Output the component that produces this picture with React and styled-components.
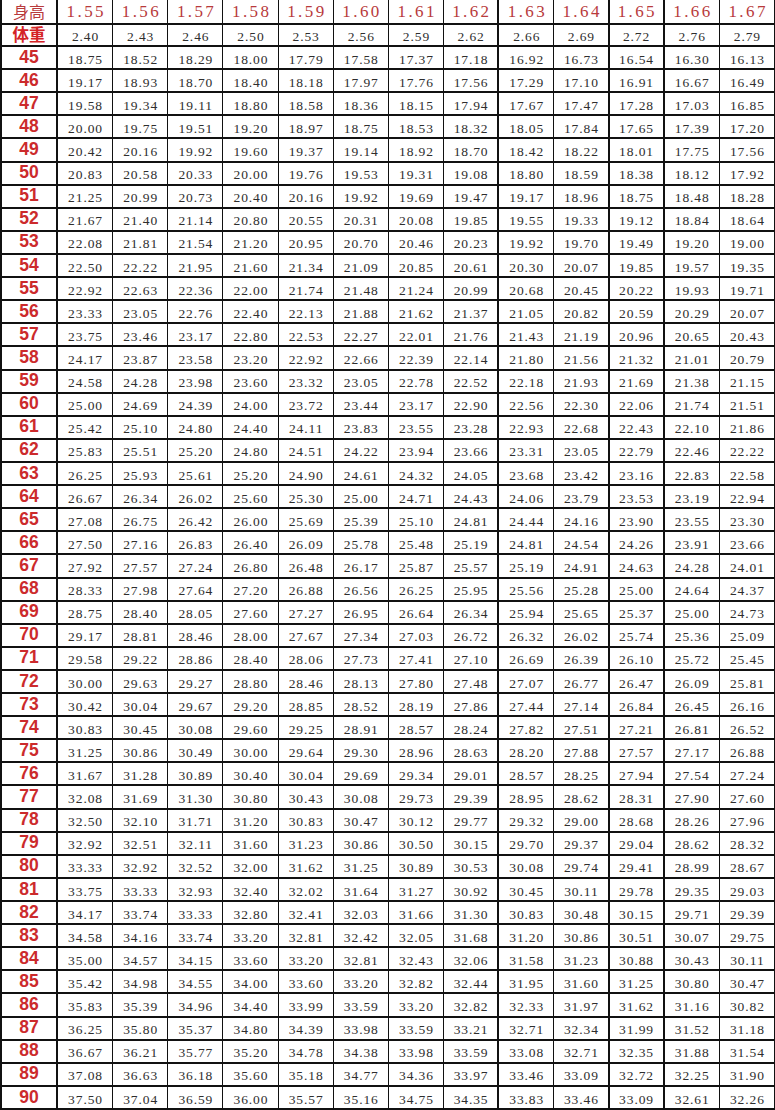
import React from "react";
import styled, { createGlobalStyle } from "styled-components";

const Global = createGlobalStyle`
  html, body { margin: 0; padding: 0; background: #fff; }
  body { width: 775px; overflow: hidden; }
`;

const heights = [1.55, 1.56, 1.57, 1.58, 1.59, 1.6, 1.61, 1.62, 1.63, 1.64, 1.65, 1.66, 1.67];
const squares = heights.map((h) => Math.round(h * h * 100) / 100);
const weights = Array.from({ length: 46 }, (_, i) => 45 + i);
const thickAfter = new Set([7, 9, 10]);

const Grid = styled.div`
  display: grid;
  width: 775px;
  height: 1110px;
  box-sizing: border-box;
  grid-template-columns: 56px repeat(13, 1fr);
  grid-template-rows: 25px 22px repeat(46, 1fr);
  border-left: 2px solid #111;
  background: #fff;
`;

const Cell = styled.div`
  box-sizing: border-box;
  display: flex;
  align-items: flex-end;
  justify-content: center;
  border-bottom: 2px solid #111;
  border-right: ${(p) => (p.$thick ? "2px" : "1px")} solid #111;
  padding-bottom: ${(p) => (p.$head ? "3px" : "2px")};
  white-space: nowrap;
  line-height: 1;
  min-height: 0;
`;

const Num = styled.span`
  font-family: "Liberation Serif", "DejaVu Serif", serif;
  font-size: 13.5px;
  letter-spacing: 0.9px;
  color: #2e2e2e;
  padding-left: 0.9px;
`;

const HeadNum = styled.span`
  font-family: "Liberation Serif", "DejaVu Serif", serif;
  font-size: 17px;
  letter-spacing: 2.4px;
  color: #b83a3c;
  padding-left: 2.4px;
`;

const HeadLabel = styled.span`
  font-family: "Noto Sans CJK SC", "Noto Sans", sans-serif;
  font-size: 16px;
  line-height: 18px;
  color: #b83a3c;
`;

const BoldLabel = styled.span`
  font-family: "Noto Sans CJK SC", "Noto Sans", sans-serif;
  font-weight: 700;
  font-size: 16.5px;
  line-height: 18px;
  color: #d42426;
`;

const RowLabel = styled.span`
  font-family: "Liberation Sans", "Arial", sans-serif;
  font-weight: 700;
  font-size: 17.5px;
  color: #cc2a2c;
`;

const fmt = (v) => (Math.round(v * 100) / 100).toFixed(2);

export default function App() {
  return (
    <>
      <Global />
      <Grid>
        <Cell $thick $head>
          <HeadLabel>身高</HeadLabel>
        </Cell>
        {heights.map((h, i) => (
          <Cell key={"h" + i} $head $thick={thickAfter.has(i)}>
            <HeadNum>{h.toFixed(2)}</HeadNum>
          </Cell>
        ))}
        <Cell $thick>
          <BoldLabel>体重</BoldLabel>
        </Cell>
        {squares.map((s, i) => (
          <Cell key={"s" + i} $thick={thickAfter.has(i)}>
            <Num>{s.toFixed(2)}</Num>
          </Cell>
        ))}
        {weights.map((w) => (
          <React.Fragment key={w}>
            <Cell $thick>
              <RowLabel>{w}</RowLabel>
            </Cell>
            {squares.map((s, i) => (
              <Cell key={w + "-" + i} $thick={thickAfter.has(i)}>
                <Num>{fmt(w / s)}</Num>
              </Cell>
            ))}
          </React.Fragment>
        ))}
      </Grid>
    </>
  );
}
